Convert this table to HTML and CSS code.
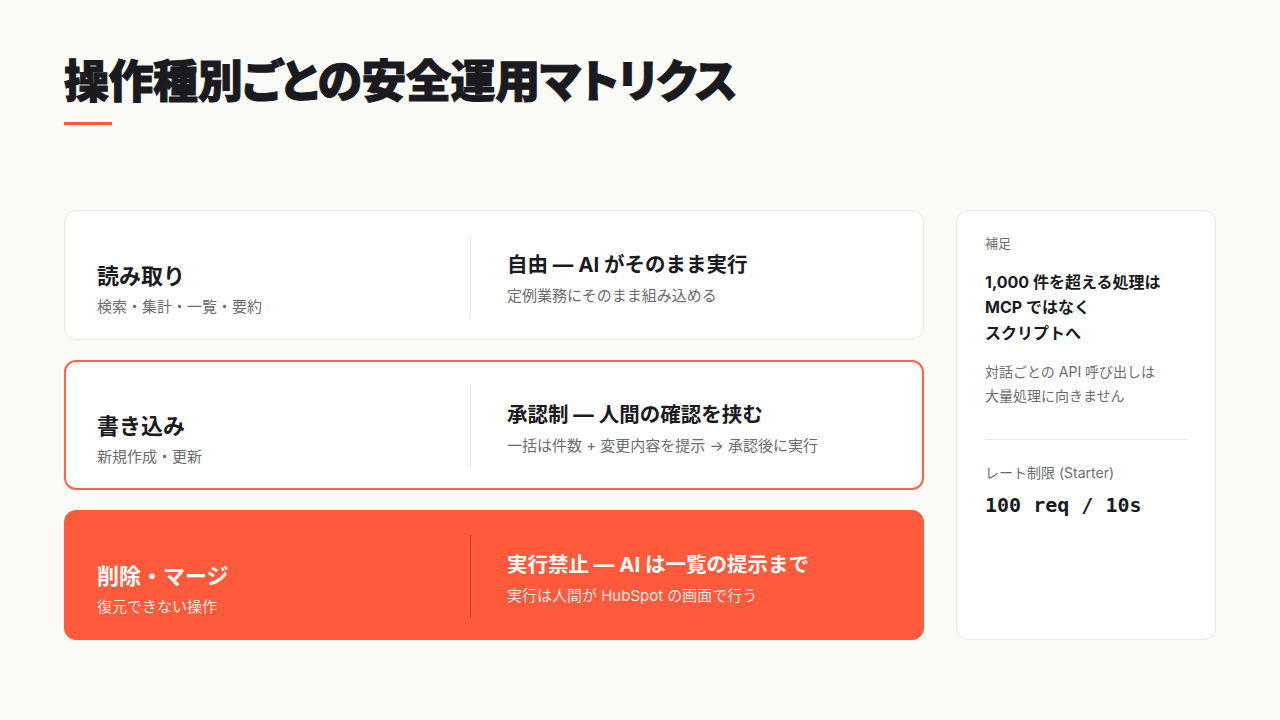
FILE: index.html
```html
<!DOCTYPE html>
<html lang="ja">
<head>
<meta charset="utf-8">
<title>操作種別ごとの安全運用マトリクス</title>
<link rel="stylesheet" href="styles.css">
</head>
<body>
<main class="page">
  <header class="head">
    <h1 class="title">操作種別ごとの安全運用マトリクス</h1>
    <div class="accent"></div>
  </header>
  <section class="layout">
    <div class="rows">
      <div class="row">
        <div class="kind">
          <div class="kind-name">読み取り</div>
          <div class="kind-desc">検索・集計・一覧・要約</div>
        </div>
        <div class="rule">
          <div class="rule-name">自由 — AI がそのまま実行</div>
          <div class="rule-desc">定例業務にそのまま組み込める</div>
        </div>
      </div>
      <div class="row row-warn">
        <div class="kind">
          <div class="kind-name">書き込み</div>
          <div class="kind-desc">新規作成・更新</div>
        </div>
        <div class="rule">
          <div class="rule-name">承認制 — 人間の確認を挟む</div>
          <div class="rule-desc">一括は件数 + 変更内容を提示 → 承認後に実行</div>
        </div>
      </div>
      <div class="row row-danger">
        <div class="kind">
          <div class="kind-name">削除・マージ</div>
          <div class="kind-desc">復元できない操作</div>
        </div>
        <div class="rule">
          <div class="rule-name">実行禁止 — AI は一覧の提示まで</div>
          <div class="rule-desc">実行は人間が HubSpot の画面で行う</div>
        </div>
      </div>
    </div>
    <aside class="side">
      <div class="side-label">補足</div>
      <p class="side-lead">1,000 件を超える処理は<br>MCP ではなく<br>スクリプトへ</p>
      <p class="side-note">対話ごとの API 呼び出しは<br>大量処理に向きません</p>
      <hr class="side-sep">
      <div class="side-label2">レート制限 (Starter)</div>
      <div class="side-mono">100 req / 10s</div>
    </aside>
  </section>
</main>
</body>
</html>
```
FILE: styles.css
```css
* { box-sizing: border-box; }
html, body { margin: 0; padding: 0; }
body {
  background: #fafaf7;
  color: #1a1a1f;
  font-family: Inter, "Noto Sans CJK JP", "Noto Sans", sans-serif;
  width: 1280px;
  height: 720px;
  overflow: hidden;
}
.page {
  padding: 56px 64px 0 64px;
}
.title {
  margin: 0;
  font-size: 45px;
  line-height: 52.8px;
  font-weight: 900;
  font-feature-settings: "palt";
  letter-spacing: -0.01em;
  color: #1a1a1f;
  -webkit-text-stroke: 1px #1a1a1f;
}
.accent {
  margin-top: 13px;
  width: 48px;
  height: 3px;
  background: #ff5a3c;
}
.layout {
  margin-top: 85px;
  display: grid;
  grid-template-columns: 860px 260px;
  gap: 32px;
}
.rows {
  display: flex;
  flex-direction: column;
  gap: 20px;
}
.row {
  height: 130px;
  background: #ffffff;
  border: 1px solid #e9e9e3;
  border-radius: 12px;
  padding: 24px 32px 21px 32px;
  display: grid;
  grid-template-columns: 373px 1fr;
}
.row-warn {
  border: 2px solid #ff6447;
  padding: 23px 31px 20px 31px;
}
.row-danger {
  background: #ff5a3c;
  border-color: #ff5a3c;
  color: #ffffff;
}
.kind {
  display: flex;
  flex-direction: column;
  justify-content: flex-end;
}
.kind-name {
  font-size: 22px;
  line-height: 30px;
  font-weight: 700;
}
.kind-desc {
  margin-top: 5px;
  font-size: 15px;
  line-height: 22px;
  color: #6b6b72;
}
.rule {
  border-left: 1px solid #ececE7;
  padding-left: 36px;
  padding-bottom: 11px;
  display: flex;
  flex-direction: column;
  justify-content: flex-end;
}
.rule-name {
  font-size: 20.5px;
  line-height: 28px;
  font-weight: 700;
}
.rule-desc {
  margin-top: 6px;
  font-size: 15px;
  line-height: 22px;
  color: #6b6b72;
}
.row-danger .kind-desc,
.row-danger .rule-desc {
  color: rgba(255, 255, 255, 0.88);
}
.row-danger .rule {
  border-left-color: rgba(40, 30, 40, 0.4);
}
.side {
  background: #ffffff;
  border: 1px solid #e9e9e3;
  border-radius: 12px;
  padding: 22px 28px;
}
.side-label {
  font-size: 13px;
  line-height: 20px;
  color: #6b6b72;
}
.side-lead {
  margin: 17px 0 0 0;
  font-size: 16px;
  line-height: 25.6px;
  font-weight: 700;
}
.side-note {
  margin: 13px 0 0 0;
  font-size: 14px;
  line-height: 24px;
  color: #6b6b72;
}
.side-sep {
  margin: 31px 0 0 0;
  border: 0;
  height: 1px;
  background: #ececE7;
}
.side-label2 {
  margin-top: 22px;
  font-size: 14px;
  line-height: 21px;
  color: #6b6b72;
}
.side-mono {
  margin-top: 9px;
  font-family: "DejaVu Sans Mono", "Liberation Mono", monospace;
  font-size: 20px;
  line-height: 26px;
  font-weight: 700;
}
```
